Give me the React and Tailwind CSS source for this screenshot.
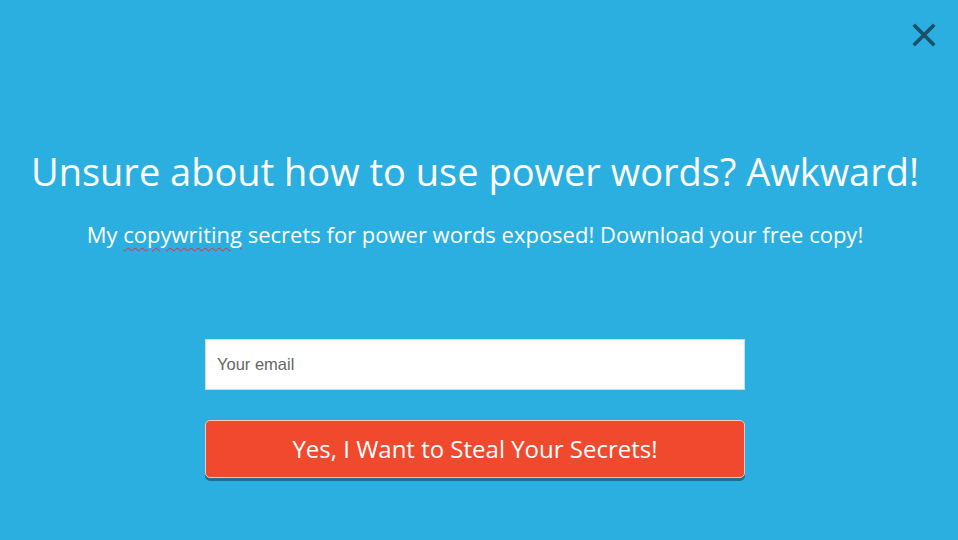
export default function App() {
  return (
    <div
      className="relative flex h-[540px] w-full flex-col items-center bg-[#2aafe0] pr-[8px] text-white"
      style={{ fontFamily: '"Open Sans", "DejaVu Sans", sans-serif' }}
    >
      <button className="absolute right-[22px] top-[23px] h-[24px] w-[24px]" aria-label="Close">
        <svg viewBox="0 0 24 24" className="h-full w-full" fill="none" stroke="#1b4f6b" strokeWidth="3.6" strokeLinecap="square">
          <path d="M3 3 L21 21 M21 3 L3 21" />
        </svg>
      </button>

      <h1 className="mt-[143px] whitespace-nowrap text-[38px] leading-[56px] font-normal">
        Unsure about how to use power words? Awkward!
      </h1>
      <p className="mt-[20px] whitespace-nowrap text-[22px] leading-[30px]">
        My{" "}
        <span className="underline decoration-wavy decoration-[#e03030] decoration-1 underline-offset-[4px]">copywriting</span>{" "}
        secrets for power words exposed! Download your free copy!
      </p>

      <form className="mt-[90px] flex w-[540px] flex-col">
        <input
          type="email"
          placeholder="Your email"
          className="h-[51px] w-full border border-[#c9dfe8] bg-white px-[11px] text-[16.5px] text-[#555] placeholder:text-[#666] outline-none"
          style={{ fontFamily: '"Liberation Sans", Arial, sans-serif' }}
        />
        <button
          type="button"
          className="mt-[30px] h-[58px] w-full rounded-[5px] border border-[#f7c7bd] bg-[#f0492e] text-[24px] text-white shadow-[0_3px_0_#1f6f8e]"
        >
          Yes, I Want to Steal Your Secrets!
        </button>
      </form>
    </div>
  );
}
